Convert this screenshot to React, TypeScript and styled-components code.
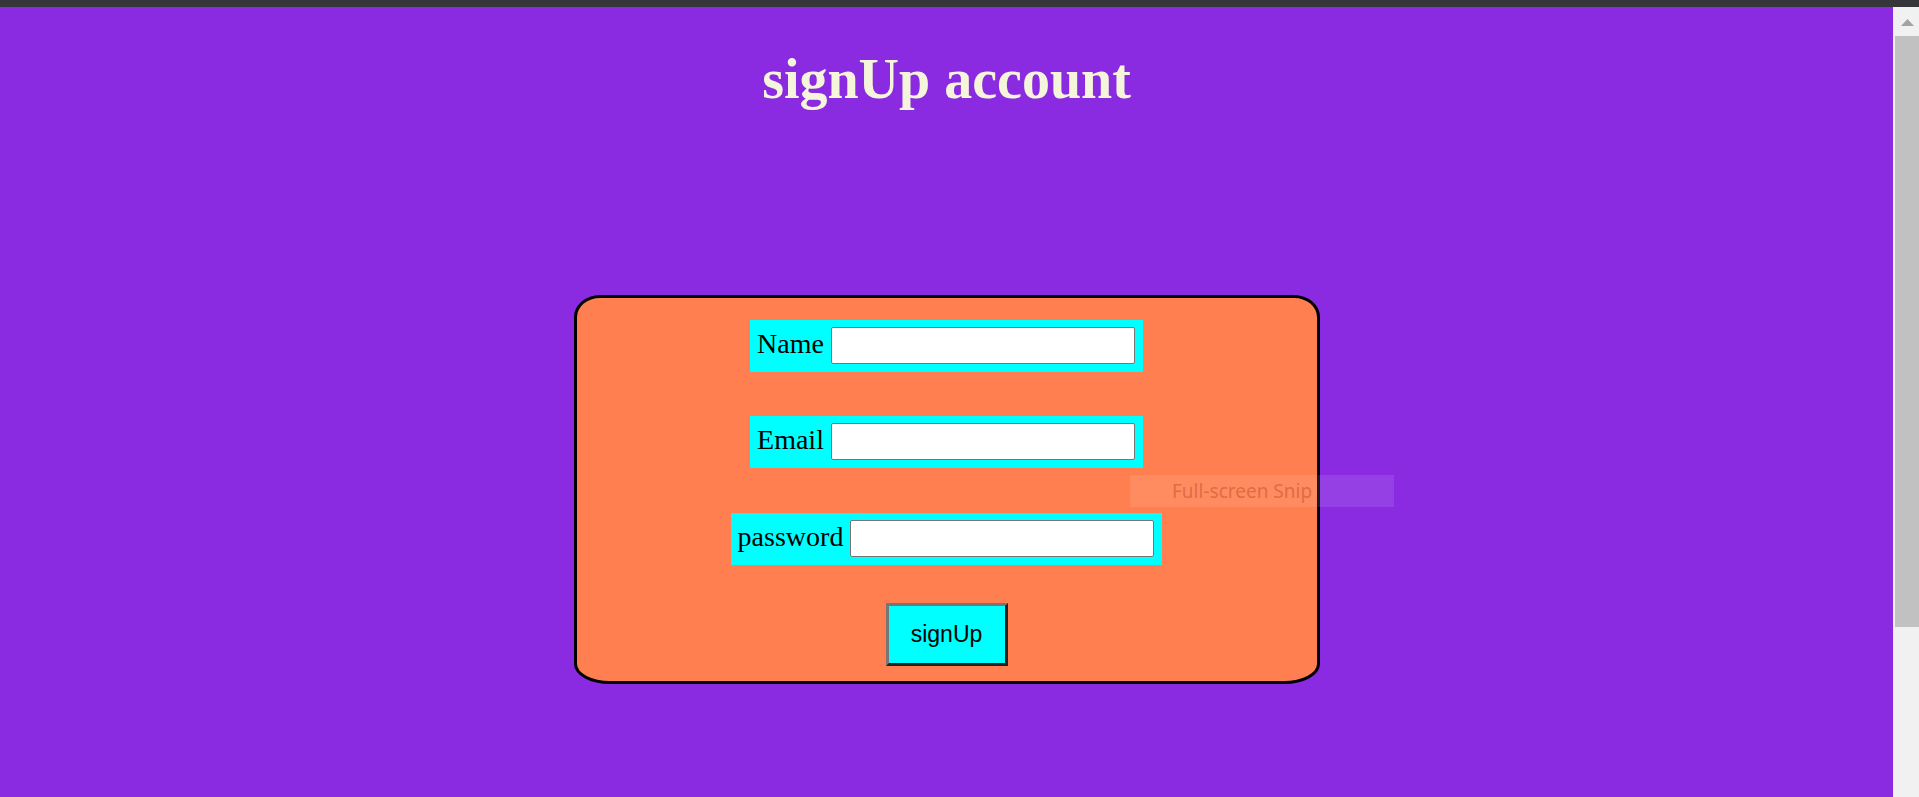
import React from "react";
import styled, { createGlobalStyle } from "styled-components";

const GlobalStyle = createGlobalStyle`
  html, body {
    margin: 0;
    padding: 0;
    height: 100%;
    overflow: hidden;
  }
  body {
    font-family: "Liberation Serif", "Times New Roman", serif;
    background: #8a2be2;
  }
  #root {
    height: 100%;
  }
`;

const Shell = styled.div`
  display: flex;
  flex-direction: column;
  height: 797px;
  width: 1919px;
`;

const TopBar = styled.div`
  height: 7px;
  flex: 0 0 7px;
  background: #35363a;
`;

const Body = styled.div`
  flex: 1;
  display: flex;
  min-height: 0;
`;

const Main = styled.main`
  position: relative;
  flex: 1;
  background: #8a2be2;
  display: flex;
  flex-direction: column;
  align-items: center;
`;

const Title = styled.h1`
  margin: 40px 0 0;
  font-family: "Liberation Serif", "Times New Roman", serif;
  font-weight: bold;
  font-size: 56px;
  line-height: normal;
  color: #f5f5dc;
  text-align: center;
`;

const Card = styled.form`
  box-sizing: border-box;
  margin-top: 184px;
  width: 746px;
  background: #ff7f50;
  border: 3px solid #000;
  border-radius: 26px 26px 36px 36px / 22px 22px 20px 20px;
  padding: 22px 0 15px;
  display: flex;
  flex-direction: column;
  align-items: center;
`;

const Field = styled.label<{ $gapAfter: number }>`
  display: flex;
  align-items: center;
  gap: 7px;
  background: #00ffff;
  padding: 7px 8px 8px 7px;
  margin-bottom: ${(p) => p.$gapAfter}px;
`;

const LabelText = styled.span`
  font-family: "Liberation Serif", "Times New Roman", serif;
  font-size: 28px;
  line-height: 32px;
  color: #000;
  position: relative;
  top: -2px;
`;

const Input = styled.input`
  box-sizing: border-box;
  width: 304px;
  height: 37px;
  border: 1px solid #767676;
  border-radius: 2px;
  background: #fff;
  padding: 2px 4px;
  font-size: 20px;
  outline: none;
`;

const Button = styled.button`
  box-sizing: border-box;
  width: 122px;
  height: 63px;
  background: #00ffff;
  border-style: solid;
  border-width: 3px;
  border-color: #767676 #222 #222 #767676;
  font-family: "Liberation Sans", Arial, sans-serif;
  font-size: 23px;
  color: #000;
  padding: 0;
  cursor: pointer;
`;

const SnipHint = styled.div`
  position: absolute;
  left: 1130px;
  top: 468px;
  width: 264px;
  height: 32px;
  box-sizing: border-box;
  padding-left: 42px;
  display: flex;
  align-items: center;
  background: rgba(255, 255, 255, 0.1);
  font-family: "Noto Sans", "Open Sans", sans-serif;
  font-size: 19px;
  color: #e36a44;
  white-space: nowrap;
`;

const Scrollbar = styled.div`
  width: 26px;
  flex: 0 0 26px;
  background: #f1f1f1;
  display: flex;
  flex-direction: column;
`;

const ArrowButton = styled.div`
  height: 29px;
  display: flex;
  justify-content: center;
  padding-top: 12px;
  box-sizing: border-box;
  padding-left: 2px;
`;

const Thumb = styled.div`
  margin-left: 2px;
  height: 591px;
  background: #c1c1c1;
`;

const fields = [
  { label: "Name", type: "text", gap: 44 },
  { label: "Email", type: "email", gap: 45 },
  { label: "password", type: "password", gap: 38 },
];

export default function App() {
  return (
    <>
      <GlobalStyle />
      <Shell>
        <TopBar />
        <Body>
          <Main>
            <Title>signUp account</Title>
            <Card onSubmit={(e) => e.preventDefault()}>
              {fields.map((f) => (
                <Field key={f.label} $gapAfter={f.gap}>
                  <LabelText>{f.label}</LabelText>
                  <Input type={f.type} />
                </Field>
              ))}
              <Button type="submit">signUp</Button>
            </Card>
            <SnipHint>Full-screen Snip</SnipHint>
          </Main>
          <Scrollbar>
            <ArrowButton>
              <svg width="13" height="7" viewBox="0 0 13 7">
                <polygon points="6.5,0 13,7 0,7" fill="#a3a3a3" />
              </svg>
            </ArrowButton>
            <Thumb />
          </Scrollbar>
        </Body>
      </Shell>
    </>
  );
}
